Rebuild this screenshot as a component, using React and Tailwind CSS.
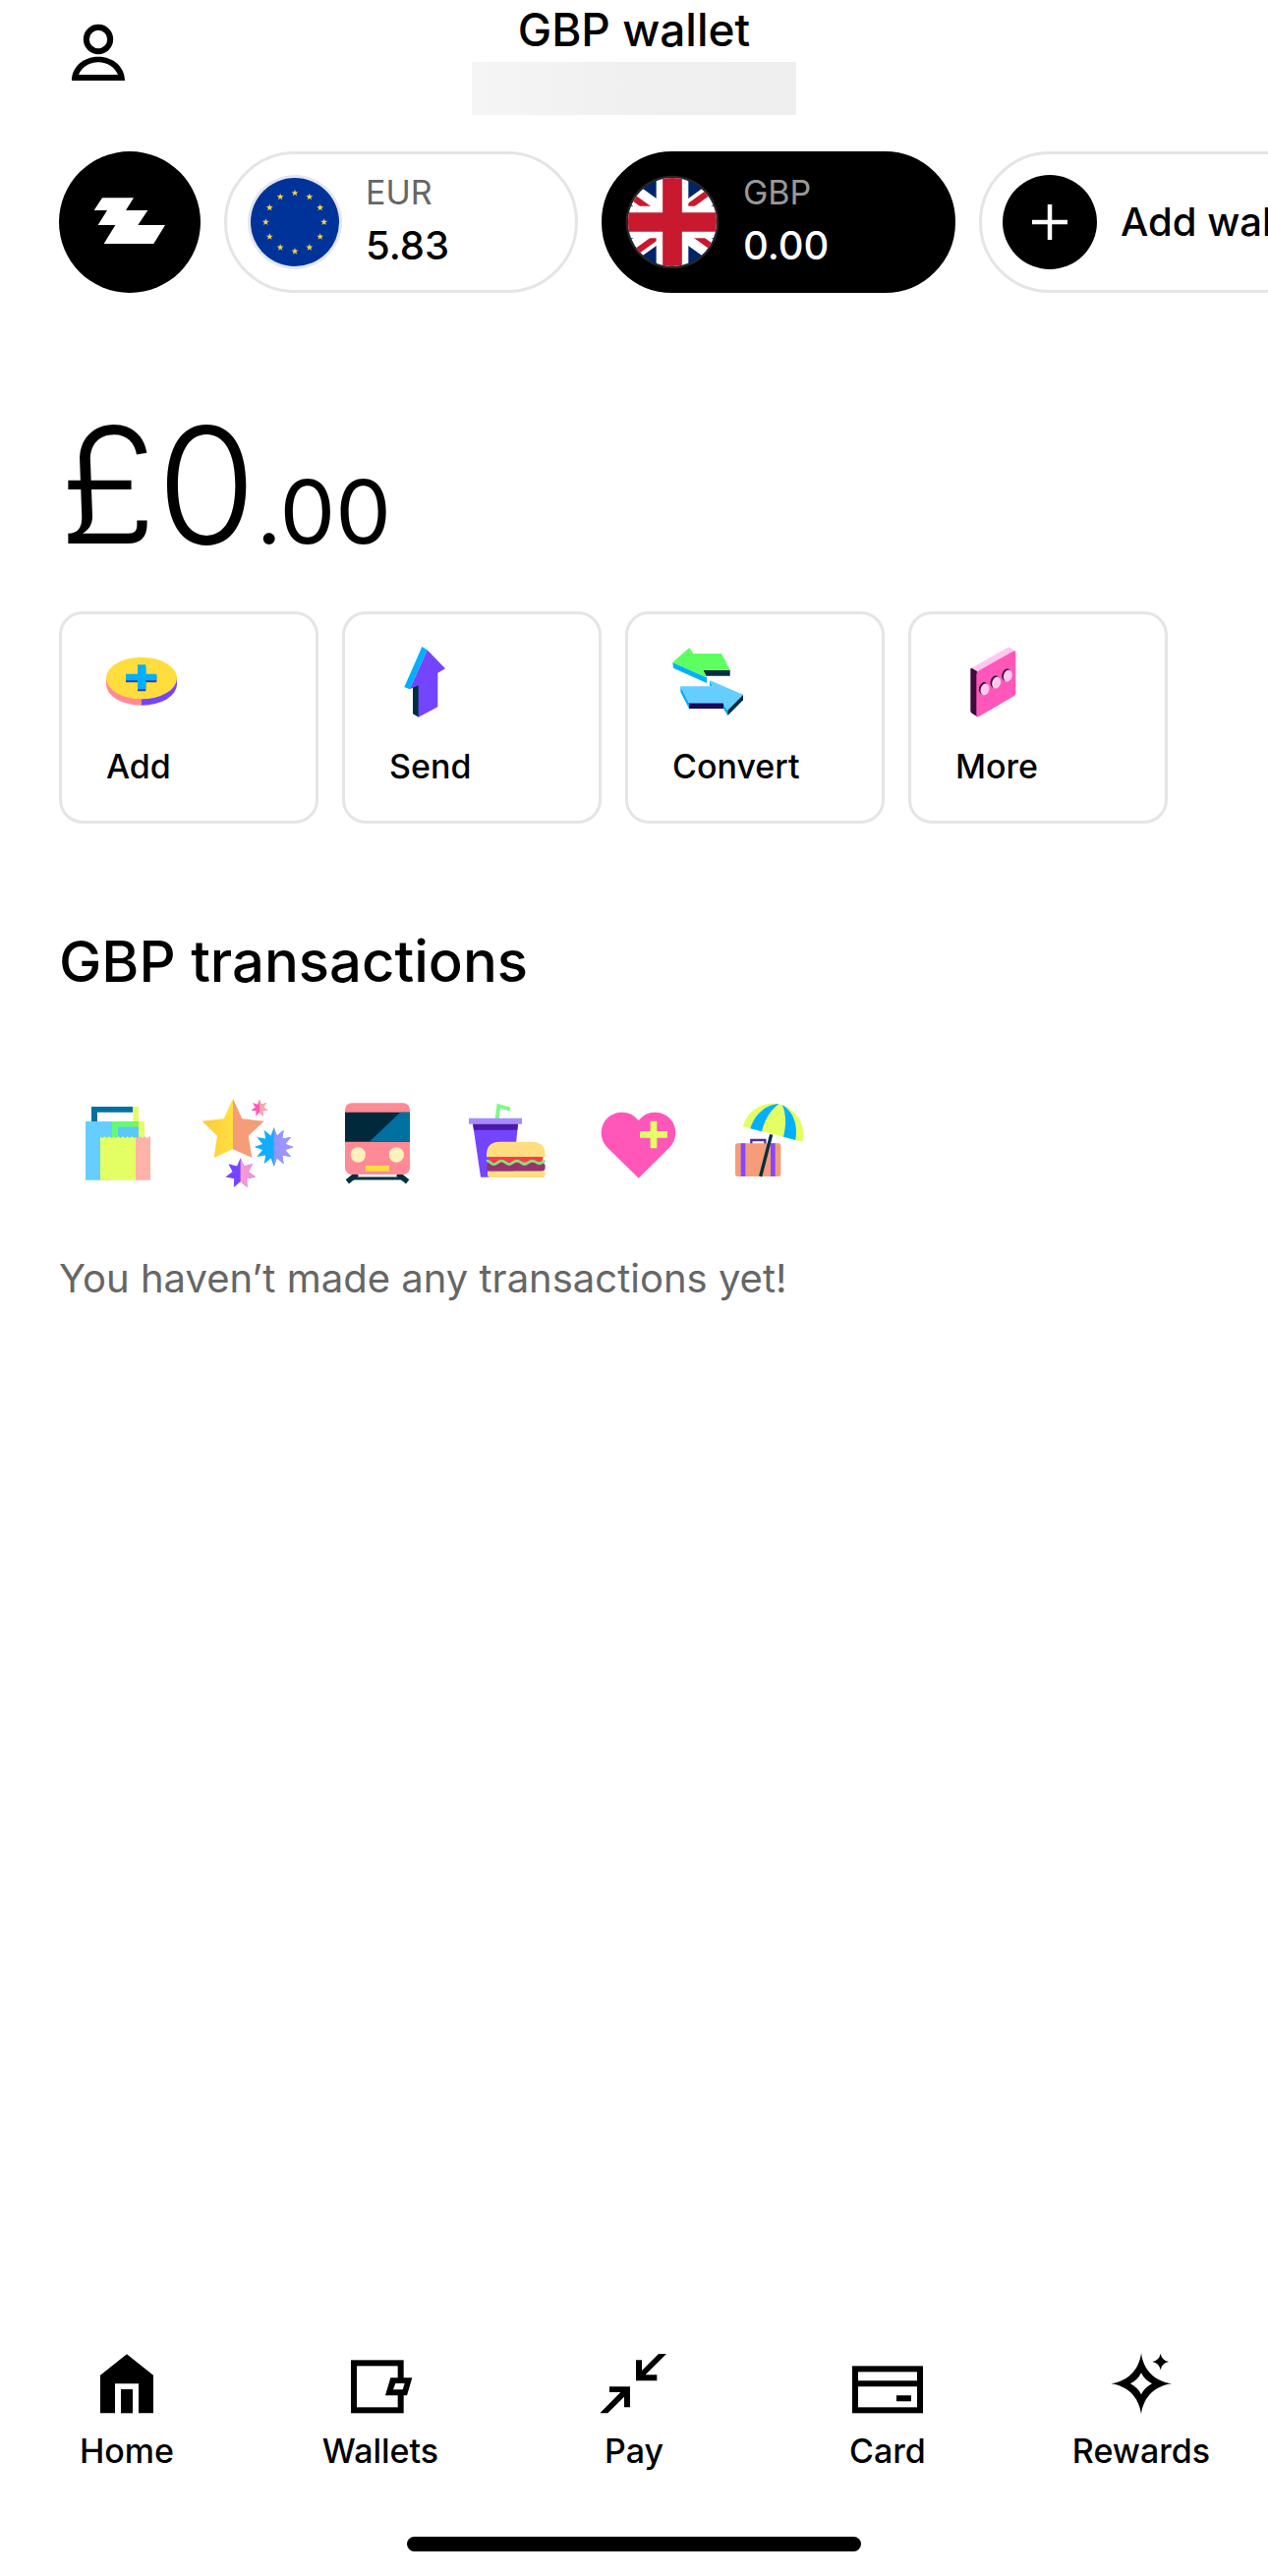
import React from "react";

function UserIcon() {
  return (
    <svg className="size-18" viewBox="192 54 216 216" aria-hidden="true">
      <circle cx="300" cy="120" r="36.5" fill="none" stroke="#000" strokeWidth="18" />
      <path fillRule="evenodd" d="M219 246C219 205 253 173 300 173S381 205 381 246ZM240 228H360C350 205 328 190 300 190S250 205 240 228Z" />
    </svg>
  );
}

function BrandMark() {
  return (
    <svg className="size-36" viewBox="180 462 432 432" aria-hidden="true">
      <path fill="#fff" d="M312 604H408L384 642H451L421 687H504L469 744H317L352 687H299L327 642H287Z" />
    </svg>
  );
}

function starPoints(cx, cy, outer, inner, n) {
  const pts = [];
  for (let i = 0; i < n * 2; i++) {
    const r = i % 2 ? inner : outer;
    const a = (Math.PI * i) / n - Math.PI / 2;
    pts.push([cx + r * Math.cos(a), cy + r * Math.sin(a)]);
  }
  return pts;
}

function Star({ cx, cy, outer, inner, n, left, right }) {
  const pts = starPoints(cx, cy, outer, inner, n);
  const str = (p) => p.map((q) => q[0].toFixed(1) + "," + q[1].toFixed(1)).join(" ");
  return (
    <g>
      <polygon points={str(pts)} fill={left} />
      {right && <polygon points={str(pts.slice(0, n + 1))} fill={right} />}
    </g>
  );
}

function EuFlag() {
  const spots = starPoints(0, 0, 89, 89, 6);
  return (
    <svg className="size-24" viewBox="-144 -144 288 288" aria-hidden="true">
      <circle r="144" fill="#e5e7ee" />
      <circle r="135" fill="#003399" />
      {spots.map(([x, y], i) => (
        <Star key={i} cx={x} cy={y} outer={11} inner={4.5} n={5} left="#f7d247" />
      ))}
    </svg>
  );
}

function UkFlag() {
  return (
    <svg className="size-24" viewBox="-144 -144 288 288" aria-hidden="true">
      <defs>
        <clipPath id="uk-round"><circle r="135" /></clipPath>
      </defs>
      <circle r="142" fill="#262626" />
      <g clipPath="url(#uk-round)">
        <rect x="-144" y="-144" width="288" height="288" fill="#00246b" />
        <path d="M-200-144L200 144M-200 144L200-144" stroke="#fff" strokeWidth="60" />
        <path d="M-200-133L0 11M0-11L200-155M-200 155L0 11M0-11L200 133" stroke="#c8192e" strokeWidth="19" />
        <path d="M0-144V144M-144 0H144" stroke="#fff" strokeWidth="98" />
        <path d="M0-144V144M-144 0H144" stroke="#c8192e" strokeWidth="59" />
      </g>
    </svg>
  );
}

function PlusBadge() {
  return (
    <svg className="size-24" viewBox="0 0 96 96" aria-hidden="true">
      <circle cx="48" cy="48" r="48" />
      <path d="M48 30V66M30 48H66" stroke="#fff" strokeWidth="4.5" />
    </svg>
  );
}

function CoinIcon() {
  return (
    <svg className="size-18" viewBox="204 774 216 216" aria-hidden="true">
      <path d="M204 868V889A108 64 0 0 0 312 953V868Z" fill="#ff8a96" />
      <path d="M420 868V889A108 64 0 0 1 312 953V868Z" fill="#7445ff" />
      <ellipse cx="312" cy="870" rx="108" ry="64" fill="#ffdd3c" />
      <path d="M264 863H300V836H325V863H358V883H325V910H300V883H264Z" fill="#3d3f9e" />
      <path d="M264 857H300V829H325V857H358V877H325V904H300V877H264Z" fill="#00b0ff" />
    </svg>
  );
}

function SendIcon() {
  return (
    <svg className="size-18" viewBox="-12 174 216 216" aria-hidden="true">
      <path d="M60 296L78 288V389L60 379Z" fill="#002f3f" />
      <path d="M104 184L159 241L136 254V358L77 389V292L50 304Z" fill="#7445ff" />
      <path d="M88 174L104 184L50 304L34 297Z" fill="#00b0ff" />
    </svg>
  );
}

function ConvertIcon() {
  return (
    <svg className="size-18" viewBox="852 174 216 216" aria-hidden="true">
      <path d="M853 222L957 268V285L855 239Z" fill="#00b0ff" />
      <path d="M946 245H1028V263H955Z" fill="#002f3f" />
      <path d="M904 177L916 195H1002L1028 245H946L957 268L853 222Z" fill="#5cff5f" />
      <path d="M877 295L903 346V363L877 312ZM966 277L974 295H966ZM1007 346L1021 368V384L1008 363Z" fill="#00b0ff" />
      <path d="M903 346H1008V363H903Z" fill="#190a5c" />
      <path d="M1068 320V337L1021 384V367Z" fill="#002f3f" />
      <path d="M967 277L1068 320L1021 368L1008 346H903L877 295H974Z" fill="#66ceff" />
    </svg>
  );
}

function MoreIcon() {
  return (
    <svg className="size-18" viewBox="516 174 216 216" aria-hidden="true">
      <path d="M565 239L676 176Q680 174 684 177L700 188L582 252Z" fill="#ffc9ee" />
      <path d="M562 242Q563 237 567 240L583 250V388L566 377Q562 374 562 370Z" fill="#3c0c3a" />
      <path d="M588 247L692 188Q700 184 700 192V316Q700 321 696 324L588 387Q580 391 580 383V259Q580 251 588 247Z" fill="#ff57b9" />
      <g fill="#3c0c3a">
        <ellipse cx="602" cy="301" rx="14" ry="19" transform="rotate(15 602 301)" />
        <ellipse cx="637" cy="281" rx="14" ry="19" transform="rotate(15 637 281)" />
        <ellipse cx="672" cy="260" rx="14" ry="19" transform="rotate(15 672 260)" />
      </g>
      <g fill="#ffc9ee">
        <ellipse cx="606" cy="304" rx="13" ry="18" transform="rotate(15 606 304)" />
        <ellipse cx="641" cy="284" rx="13" ry="18" transform="rotate(15 641 284)" />
        <ellipse cx="676" cy="263" rx="13" ry="18" transform="rotate(15 676 263)" />
      </g>
    </svg>
  );
}

function ShoppingArt() {
  return (
    <svg className="size-24" viewBox="66 69 288 288" aria-hidden="true">
      <path d="M129 153V108H256V125H147V153Z" fill="#0070a0" />
      <path d="M111 153H192V332H111Z" fill="#66ceff" />
      <path d="M256 108H273V153H291V210H256Z" fill="#e4ff63" />
      <path d="M192 153H273V210H192Z" fill="#66fa73" />
      <path d="M256 153H273V170H256Z" fill="#7df25e" />
      <path d="M210 170H273V210H210Z" fill="#5cc8f5" />
      <path d="M156 200L162 204L169 199L176 204L183 199L190 204L197 199L204 204L211 199L218 204L225 199L232 204L239 199L246 204L253 199L260 204L265 200V332H156Z" fill="#e4ff63" />
      <path d="M264 200L271 204L278 199L285 204L292 199L299 204L309 197V332H264Z" fill="#ffb2a8" />
    </svg>
  );
}

function StarsArt() {
  return (
    <svg className="size-24" viewBox="461 69 288 288" aria-hidden="true">
      <defs>
        <linearGradient id="gold"><stop offset="0" stopColor="#ffc93a" /><stop offset="1" stopColor="#ffe040" /></linearGradient>
        <linearGradient id="iris"><stop offset="0" stopColor="#8f97ff" /><stop offset="1" stopColor="#b48cff" /></linearGradient>
        <linearGradient id="rose"><stop offset="0" stopColor="#ff9ad0" /><stop offset="1" stopColor="#e58fe8" /></linearGradient>
      </defs>
      <path d="M560 84L532 145L466 152L512 197L502 264L560 238Z" fill="url(#gold)" />
      <path d="M560 84L588 145L655 152L607 197L618 264L560 238Z" fill="#f59c78" />
      <Star cx={641} cy={113} outer={27} inner={13} n={7} left="#ff57b9" right="#ffa8a8" />
      <Star cx={685} cy={231} outer={60} inner={36} n={12} left="#12adff" right="url(#iris)" />
      <Star cx={583} cy={312} outer={47} inner={25} n={7} left="#7445ff" right="url(#rose)" />
    </svg>
  );
}

function BusArt() {
  return (
    <svg className="size-24" viewBox="858 69 288 288" aria-hidden="true">
      <path d="M910 337L940 313M1094 337L1064 313" stroke="#002f3f" strokeWidth="16" />
      <path d="M922 327H1082" stroke="#002f3f" strokeWidth="9" />
      <rect x="903" y="97" width="198" height="218" rx="20" fill="#ff8a96" />
      <path d="M903 125H1101V215H903Z" fill="#002a3c" />
      <path d="M1072 125H1101V215H977Z" fill="#0070a0" />
      <circle cx="943" cy="255" r="23" fill="#fff1bd" />
      <circle cx="1060" cy="255" r="23" fill="#fff1bd" />
      <path d="M966 288H1038V305H966Z" fill="#ffdd3c" />
    </svg>
  );
}

function FoodArt() {
  return (
    <svg className="size-24" viewBox="54 69 288 288" aria-hidden="true">
      <path d="M167 145L172 106L207 116" fill="none" stroke="#7dfa85" strokeWidth="12" />
      <path d="M93 160H231L215 323H117Z" fill="#7445ff" />
      <path d="M93 160H231L229 179H96Z" fill="#4a1aa6" />
      <path d="M81 143H243V161H81Z" fill="#a68bff" />
      <path d="M135 262V252Q137 215 176 215H273Q312 215 314 252V262Z" fill="#ffdd80" />
      <path d="M143 261H307V278H143Z" fill="#fc3b4d" />
      <rect x="135" y="279" width="179" height="26" rx="11" fill="#993370" />
      <path d="M135 274C143 270 148 284 157 284S172 273 181 273S196 284 204 284S219 273 228 273S243 284 251 284S266 273 275 273S290 284 298 281S308 274 314 275" fill="none" stroke="#7ce86f" strokeWidth="8" />
      <path d="M138 305H314V314Q314 324 303 324H149Q138 324 138 314Z" fill="#ffdd80" />
    </svg>
  );
}

function HeartArt() {
  return (
    <svg className="size-24" viewBox="450 69 288 288" aria-hidden="true">
      <path d="M599 326L504 233A63 63 0 0 1 549 125Q579 125 599 150Q619 125 648 125A63 63 0 0 1 693 233Z" fill="#ff57b9" />
      <path d="M603 183H635V152H655V183H687V203H655V235H635V203H603Z" fill="#e4ff63" />
    </svg>
  );
}

function TravelArt() {
  return (
    <svg className="size-24" viewBox="846 69 288 288" aria-hidden="true">
      <path d="M943 223V210H985V223" fill="none" stroke="#5a2ca0" strokeWidth="7" />
      <rect x="894" y="220" width="139" height="101" rx="7" fill="#f59c78" />
      <path d="M911 220H925V321H911ZM1002 220H1016V321H1002Z" fill="#8447ff" />
      <path d="M1004 193L971 321" stroke="#002f3f" strokeWidth="10" />
      <g transform="translate(1008 192) rotate(14.5)">
        <path d="M-94 0A94 94 0 0 1 94 0Z" fill="#e4ff63" />
        <path d="M-70 0C-68-48-38-86-4-94C-24-72-34-38-34 0ZM72 0C70-48 40-86 6-94C24-72 34-38 34 0Z" fill="#00b0ff" />
      </g>
    </svg>
  );
}

function HomeIcon() {
  return (
    <svg className="size-18" viewBox="159 87 216 216" aria-hidden="true">
      <path d="M267 106L348 170V286H303V196H231V286H186V170Z" />
      <path d="M249 213H285V286H249Z" />
    </svg>
  );
}

function WalletIcon() {
  return (
    <svg className="size-18" viewBox="933 87 216 216" aria-hidden="true">
      <rect x="960" y="133" width="143" height="144" fill="none" stroke="#000" strokeWidth="18" />
      <path d="M1072 178H1138L1122 232H1056Z" />
      <path d="M1087 195H1115L1109 214H1080Z" fill="#fff" />
    </svg>
  );
}

function PayIcon() {
  return (
    <svg className="size-18" viewBox="417 87 216 216" aria-hidden="true">
      <path d="M531 124H549V156L600 105H624L560 169H595V187H531Z" />
      <path d="M450 205H513V268H495V236L445 286H421L484 222H450Z" />
    </svg>
  );
}

function CardIcon() {
  return (
    <svg className="size-18" viewBox="1188 87 216 216" aria-hidden="true">
      <rect x="1197" y="151" width="198" height="126" fill="none" stroke="#000" strokeWidth="18" />
      <path d="M1197 187H1395V205H1197ZM1323 232H1368V250H1323Z" />
    </svg>
  );
}

function RewardsIcon() {
  return (
    <svg className="size-18" viewBox="675 87 216 216" aria-hidden="true">
      <path
        fillRule="evenodd"
        d="M783 103C790 155 824 189 876 196C824 203 790 237 783 289C776 237 742 203 691 196C742 189 776 155 783 103ZM783 163Q793 184 816 196Q793 208 783 229Q773 208 750 196Q773 184 783 163Z"
      />
      <path d="M842 104Q846 125 867 129Q846 133 842 154Q838 133 817 129Q838 125 842 104Z" />
    </svg>
  );
}

const wallets = [
  { code: "EUR", value: "5.83", Flag: EuFlag, active: false },
  { code: "GBP", value: "0.00", Flag: UkFlag, active: true },
];

const actions = [
  { label: "Add", Icon: CoinIcon },
  { label: "Send", Icon: SendIcon },
  { label: "Convert", Icon: ConvertIcon },
  { label: "More", Icon: MoreIcon },
];

const categories = [ShoppingArt, StarsArt, BusArt, FoodArt, HeartArt, TravelArt];

const tabs = [
  { label: "Home", Icon: HomeIcon },
  { label: "Wallets", Icon: WalletIcon },
  { label: "Pay", Icon: PayIcon },
  { label: "Card", Icon: CardIcon },
  { label: "Rewards", Icon: RewardsIcon },
];

function WalletChip({ code, value, Flag, active }) {
  const tone = active ? "border-black bg-black text-white" : "border-[#e5e5e5] bg-white text-black";
  return (
    <button type="button" aria-pressed={active} className={`flex h-36 w-90 shrink-0 items-center gap-6 rounded-full border-3 pl-[21px] text-left ${tone}`}>
      <Flag />
      <span className="flex flex-col">
        <span className={`text-[34px] leading-[48px] ${active ? "text-[#999999]" : "text-[#666666]"}`}>{code}</span>
        <span className="text-[40px] leading-[60px] font-medium">{value}</span>
      </span>
    </button>
  );
}

export default function App() {
  return (
    <div className="flex min-h-screen flex-col overflow-x-hidden bg-white font-['Inter',sans-serif] text-black">
      <header className="grid grid-cols-[1fr_auto_1fr] items-start px-16">
        <button type="button" aria-label="Profile" className="mt-[18px] size-18">
          <UserIcon />
        </button>
        <div className="flex flex-col items-center gap-[3px]">
          <h1 className="text-[46px] leading-[60px] font-medium">GBP wallet</h1>
          <div className="h-[54px] w-[330px] bg-linear-to-r from-[#f5f5f5] via-[#f0f0f0] to-[#efefef]" />
        </div>
      </header>

      <main className="flex flex-col">
        <section aria-label="Wallets" className="mt-[37px] flex gap-6 overflow-hidden pl-15">
          <button type="button" aria-label="All accounts" className="size-36 shrink-0 rounded-full bg-black">
            <BrandMark />
          </button>
          {wallets.map((w) => (
            <WalletChip key={w.code} {...w} />
          ))}
          <button type="button" className="flex h-36 w-[420px] shrink-0 items-center gap-6 rounded-full border-3 border-[#e5e5e5] bg-white pl-[21px]">
            <PlusBadge />
            <span className="text-[40px] leading-[60px] font-medium">Add wallet</span>
          </button>
        </section>

        <p className="mt-28 px-15 text-[164px] leading-[168px] font-light">
          £0<span className="text-[90px] leading-none font-normal">.00</span>
        </p>

        <section aria-label="Actions" className="mt-11 flex gap-6 px-15">
          {actions.map(({ label, Icon }) => (
            <button key={label} type="button" className="flex w-66 flex-col items-start gap-[26px] rounded-3xl border-3 border-[#e5e5e5] pt-[33px] pb-[31px] pl-[45px]">
              <Icon />
              <span className="text-[34px] leading-[48px] font-medium">{label}</span>
            </button>
          ))}
        </section>

        <section className="mt-[104px] px-15">
          <h2 className="text-[58px] leading-[72px] font-medium">GBP transactions</h2>
          <div className="mt-[99px] flex gap-9 pl-3">
            {categories.map((Art, i) => (
              <Art key={i} />
            ))}
          </div>
          <p className="mt-[62px] text-[40px] leading-[60px] text-[#666666]">You haven’t made any transactions yet!</p>
        </section>
      </main>

      <nav aria-label="Main" className="mt-auto grid grid-cols-5">
        {tabs.map(({ label, Icon }) => (
          <a key={label} href="#" className="flex flex-col items-center gap-[9px]">
            <Icon />
            <span className="text-[34px] leading-[48px] font-medium">{label}</span>
          </a>
        ))}
      </nav>
      <div className="mx-auto mt-[63px] mb-[25px] h-[15px] w-[462px] rounded-full bg-black" />
    </div>
  );
}
